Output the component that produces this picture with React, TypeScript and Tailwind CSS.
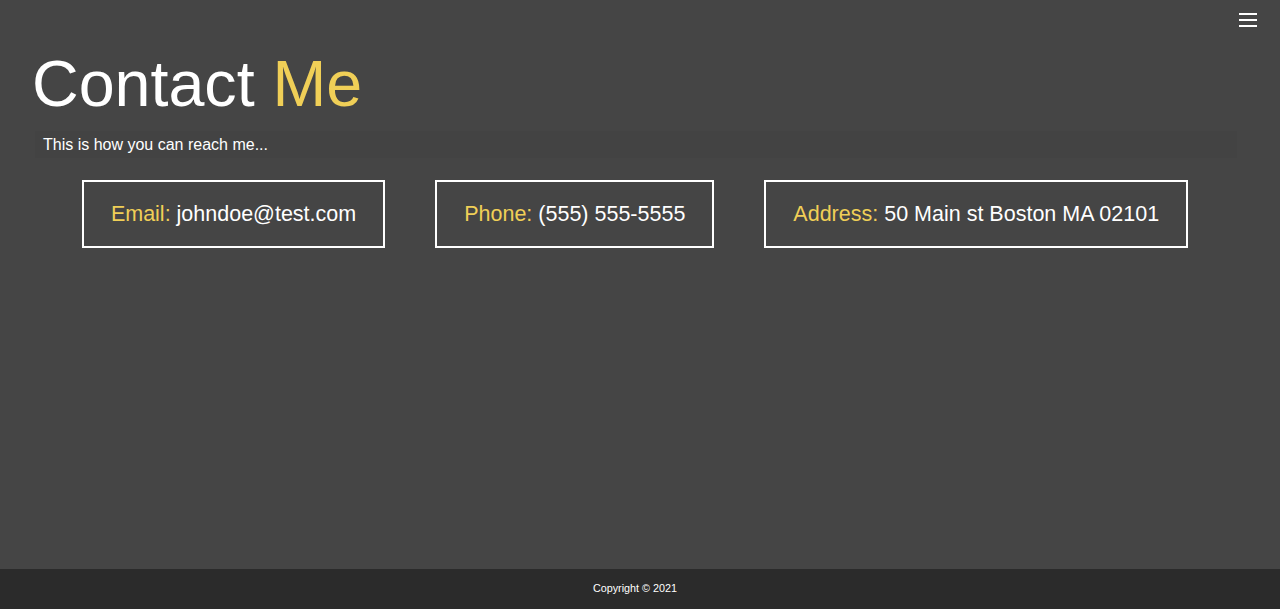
export default function App() {
  const items = [
    { label: "Email:", value: "johndoe@test.com" },
    { label: "Phone:", value: "(555) 555-5555" },
    { label: "Address:", value: "50 Main st Boston MA 02101" },
  ];

  return (
    <div className="flex h-[609px] flex-col bg-[#454545] font-['Liberation_Sans',Arial,sans-serif] text-white">
      {/* Menu toggle */}
      <div className="flex justify-end px-[23px] pt-[13px]">
        <button className="flex w-[18px] flex-col gap-[4px]">
          <span className="block h-[2px] w-full bg-white" />
          <span className="block h-[2px] w-full bg-white" />
          <span className="block h-[2px] w-full bg-white" />
        </button>
      </div>

      <main className="flex-1">
        <h1 className="mt-[20px] ml-[32px] text-[64.6px] leading-[74px]">
          Contact <span className="text-[#f0cf57]">Me</span>
        </h1>

        <div className="mx-[35px] mt-[10px] w-[1202px] bg-[#434343] px-[8px] py-[4px] text-[16px] leading-[19px]">
          This is how you can reach me...
        </div>

        <div className="mt-[22px] flex justify-center gap-[50px] pr-[10px]">
          {items.map((item) => (
            <div
              key={item.label}
              className="border-2 border-white px-[27px] py-[20px] text-[21.5px] leading-[24px]"
            >
              <span className="text-[#f0cf57]">{item.label}</span> {item.value}
            </div>
          ))}
        </div>
      </main>

      {/* Footer */}
      <footer className="flex h-[40px] items-center justify-center bg-[#2b2b2b] pr-[10px] pb-[2px] text-[10.8px]">
        Copyright © 2021
      </footer>
    </div>
  );
}
